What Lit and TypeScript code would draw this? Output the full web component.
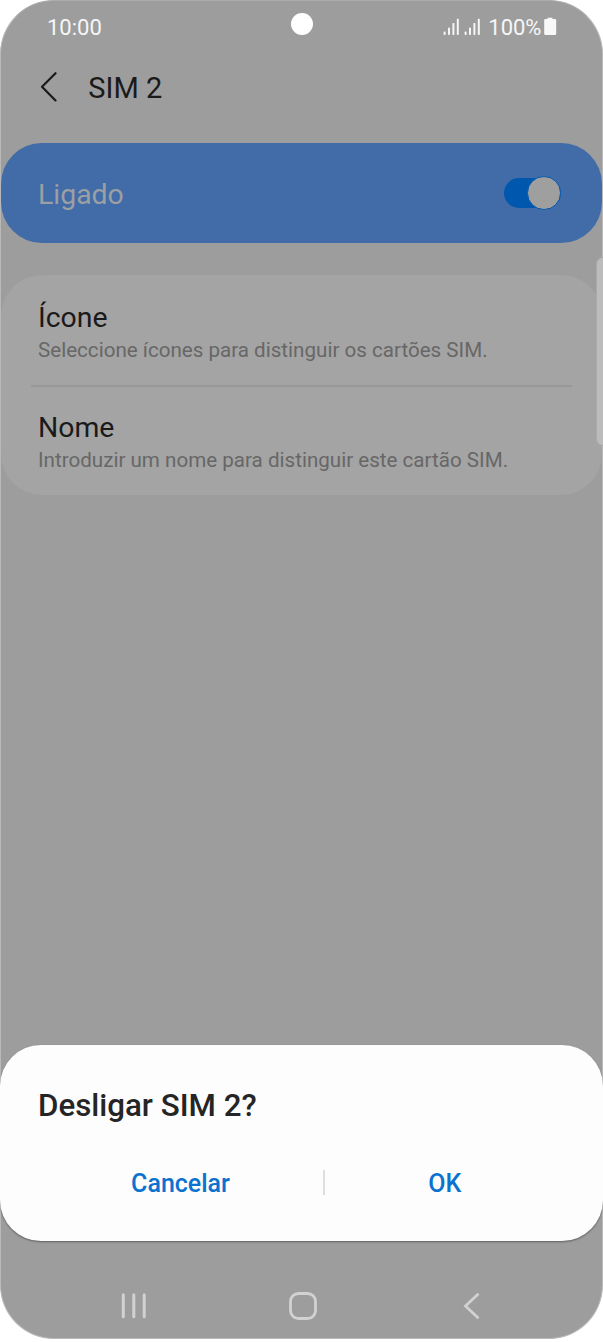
import { LitElement, html, css, svg } from "lit";
import { customElement, property } from "lit/decorators.js";

@customElement("signal-bars")
class SignalBars extends LitElement {
  static styles = css`
    :host { display: block; width: 17px; height: 18px; }
    svg { display: block; }
  `;
  render() {
    const bars = [[0.6, 13.4], [5, 9.6], [9.4, 5], [13.8, 0.8]];
    return html`<svg width="17" height="18" viewBox="0 0 17 18">
      ${bars.map(([x, y]) => svg`<rect x=${x} y=${y} width="2" height=${17 - y} rx="0.7" fill="#f6f6f6" />`)}
    </svg>`;
  }
}

@customElement("setting-row")
class SettingRow extends LitElement {
  @property() label = "";
  @property() hint = "";
  static styles = css`
    :host { display: block; height: 110px; box-sizing: border-box; padding: 26.5px 0 0 37px; white-space: nowrap; }
    .label { font-size: 28.4px; line-height: 34px; color: #1a1a1a; }
    .hint { font-size: 20.6px; line-height: 30px; color: #676767; }
  `;
  render() {
    return html`<div class="label">${this.label}</div><div class="hint">${this.hint}</div>`;
  }
}

@customElement("app-root")
class AppRoot extends LitElement {
  static styles = css`
    :host { display: block; height: 1342px; background: #fff; font-family: Roboto, sans-serif; }
    .screen {
      position: relative; display: flex; flex-direction: column; box-sizing: border-box;
      width: 603px; height: 1339px; border: 1px solid #b9b9b9; border-top-color: #acacac;
      border-radius: 54px; background: #9d9d9d;
    }
    .status {
      height: 53px; display: grid; grid-template-columns: 1fr auto 1fr; align-items: center;
      padding: 0 45px 0 46px; font-size: 22px; line-height: 26px; color: #f6f6f6;
    }
    .camera { width: 22px; height: 22px; border-radius: 50%; background: #fff; margin: -8px 1px 0 0; }
    .tray { display: flex; justify-content: flex-end; align-items: center; }
    .tray signal-bars { margin: -2px 4px 0 0; }
    .percent { margin-left: 3px; }
    .battery { display: block; margin: -2px 0 0 2.5px; }
    .header { height: 68px; display: flex; align-items: center; padding-left: 38px; }
    .title { margin: 0 0 0 29.3px; font-size: 29px; font-weight: 400; line-height: 34px; color: #1a1a1a; }
    .banner {
      height: 100.5px; margin-top: 20.5px; border-radius: 41px; background: #416ca7;
      display: flex; align-items: center; justify-content: space-between; padding: 0 41.5px 0 37px;
    }
    .banner-label { font-size: 28.4px; line-height: 34px; color: #9c9fa3; padding-top: 4px; }
    .switch {
      width: 56.5px; height: 30px; border-radius: 15px; background: #0057ae;
      display: flex; align-items: center; justify-content: flex-end;
    }
    .thumb { flex: none; width: 31.5px; height: 31.5px; border-radius: 50%; background: #9f9f9f; border: 1.5px solid #0057ae; }
    .card { height: 220px; margin-top: 31.5px; border-radius: 41px; background: #a4a4a4; }
    .rule { height: 2px; margin: 0 30px -2px 30px; background: #989898; }
    .edge {
      position: absolute; right: -1px; top: 256px; width: 7px; height: 189px;
      box-sizing: border-box; border-radius: 7px 0 0 7px; background: #bcbcbc; border: 1px solid #aaa; border-right: 0;
    }
    .dialog {
      height: 196.5px; margin: auto -1px 0; border-radius: 41px; background: #fdfdfd;
      box-shadow: 0 1px 2px rgba(0, 0, 0, 0.4); box-sizing: border-box; padding-top: 43px;
    }
    .question { margin: 0; padding-left: 38px; font-size: 31.3px; line-height: 36px; font-weight: 500; color: #252525; white-space: nowrap; }
    .actions { display: flex; align-items: center; margin-top: 40px; padding: 0 38px; }
    .action {
      flex: 1; text-align: center; border: 0; padding: 1px 0 0; background: none; font: inherit;
      font-size: 25px; line-height: 37px; font-weight: 500; color: #0b72cf;
    }
    .action.first { flex: 0 0 285px; }
    .split { width: 1.5px; height: 25px; background: #dedede; }
    .nav { height: 97px; display: flex; align-items: center; padding: 33px 0 0 120px; box-sizing: border-box; }
    .home { margin-left: 141.5px; }
    .back { margin-left: 145.5px; }
  `;

  render() {
    return html`
      <div class="screen">
        <div class="status">
          <span>10:00</span>
          <span class="camera"></span>
          <div class="tray">
            <signal-bars></signal-bars><signal-bars></signal-bars>
            <span class="percent">100%</span>
            <svg class="battery" width="13" height="19" viewBox="0 0 13 19">
              <path d="M3.5 2V.8h5V2H11q1.2 0 1.2 1.2v13.6q0 1.2-1.2 1.2H1.4Q.2 18 .2 16.8V3.2Q.2 2 1.4 2z" fill="#f8f8f8" />
            </svg>
          </div>
        </div>
        <div class="header">
          <svg width="20" height="32" viewBox="0 0 20 32">
            <path d="M16.5 1.2 3 14.8 16.5 28.4" fill="none" stroke="#1a1a1a" stroke-width="2.2" stroke-linecap="round" stroke-linejoin="round" />
          </svg>
          <h1 class="title">SIM 2</h1>
        </div>
        <div class="banner">
          <span class="banner-label">Ligado</span>
          <span class="switch"><span class="thumb"></span></span>
        </div>
        <div class="card">
          <setting-row label="Ícone" hint="Seleccione ícones para distinguir os cartões SIM."></setting-row>
          <div class="rule"></div>
          <setting-row label="Nome" hint="Introduzir um nome para distinguir este cartão SIM."></setting-row>
        </div>
        <div class="edge"></div>
        <div class="dialog">
          <h2 class="question">Desligar SIM 2?</h2>
          <div class="actions">
            <button class="action first">Cancelar</button>
            <span class="split"></span>
            <button class="action">OK</button>
          </div>
        </div>
        <div class="nav">
          <svg width="26" height="28" viewBox="0 0 26 28">
            <path d="M2.3 2.8v22M12.8 2.8v22M23.2 2.8v22" stroke="#d2d2d2" stroke-width="3" stroke-linecap="round" />
          </svg>
          <svg class="home" width="28" height="28" viewBox="0 0 28 28">
            <rect x="1.5" y="1.5" width="25" height="25" rx="8" fill="none" stroke="#d2d2d2" stroke-width="2.8" />
          </svg>
          <svg class="back" width="18" height="28" viewBox="0 0 18 28">
            <path d="M15.7 2.6 3.5 14 15.7 25.4" fill="none" stroke="#d2d2d2" stroke-width="2.8" stroke-linecap="round" />
          </svg>
        </div>
      </div>
    `;
  }
}
